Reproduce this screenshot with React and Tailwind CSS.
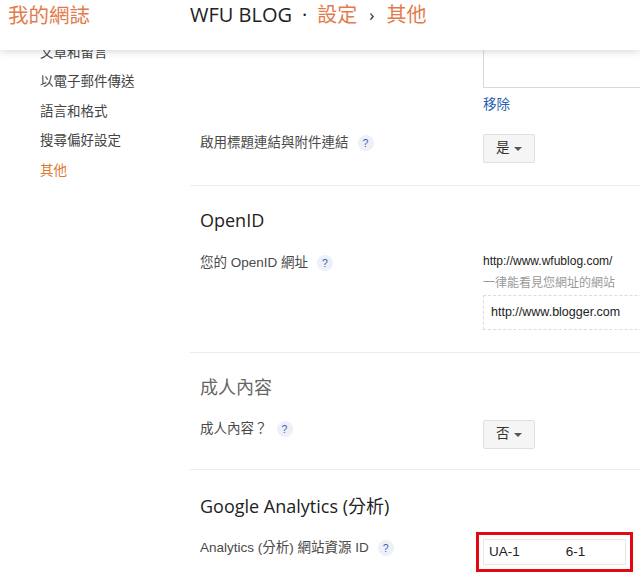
import React from "react";

const ORANGE = "text-[#e27b4c]";

function Help() {
    return (
        <span className="ml-[9px] inline-flex h-[16px] w-[16px] shrink-0 items-center justify-center rounded-full bg-[#eef0f7] text-[10.5px] leading-none text-[#3b63b8]">
            ?
        </span>
    );
}

function Select({ value }) {
    return (
        <div className="flex h-[29px] w-[52px] items-center justify-between rounded-[2px] border border-[#e0e0e0] bg-[#f5f5f5] pl-[12px] pr-[12px] text-[13.5px] text-[#333]">
            <span>{value}</span>
            <span className="h-0 w-0 border-x-[4px] border-t-[4px] border-x-transparent border-t-[#555]" />
        </div>
    );
}

function Row({ label, children, className = "" }) {
    return (
        <div className={"grid grid-cols-[283px_1fr] " + className}>
            <div className="flex h-[18px] items-center text-[13.5px] leading-[18px] text-[#4a4a4a]">
                {label}
                <Help />
            </div>
            <div>{children}</div>
        </div>
    );
}

function Section({ title, muted, className = "", children }) {
    return (
        <section className={"border-b border-[#ebebeb] pl-[10px] pt-[22px] " + className}>
            <h2
                className={
                    "font-['Open_Sans','Noto_Sans_CJK_TC',sans-serif] text-[18px] leading-[24px] " +
                    (muted ? "text-[#666]" : "text-[#222]")
                }
            >
                {title}
            </h2>
            {children}
        </section>
    );
}

export default function App() {
    const nav = ["文章和留言", "以電子郵件傳送", "語言和格式", "搜尋偏好設定"];
    return (
        <div className="flex h-[578px] w-[640px] flex-col overflow-hidden bg-white font-['Liberation_Sans',Arial,'Noto_Sans_CJK_TC',sans-serif]">
            {/* Header */}
            <header className="relative z-10 flex h-[50px] shrink-0 items-start bg-white pt-[1px] shadow-[0_2px_7px_rgba(0,0,0,0.14)]">
                <div className={"w-[190px] shrink-0 pl-[8px] font-['Noto_Sans_CJK_TC',sans-serif] text-[20.5px] leading-[27px] " + ORANGE}>
                    我的網誌
                </div>
                <div className="flex items-center font-['Open_Sans','Noto_Sans_CJK_TC',sans-serif] text-[20px] leading-[27px] text-[#222]">
                    <span>WFU BLOG</span>
                    <span className="mx-[10px]">·</span>
                    <span className={ORANGE}>設定</span>
                    <span className="mx-[12px] text-[17px]">›</span>
                    <span className={ORANGE}>其他</span>
                </div>
            </header>

            <div className="flex min-h-0 flex-1 overflow-hidden">
                {/* Sidebar */}
                <nav className="-mt-[12px] w-[190px] shrink-0 pl-[40px] text-[13.5px] text-[#444]">
                    {nav.map((n) => (
                        <div key={n} className="flex h-[29.5px] items-center">
                            {n}
                        </div>
                    ))}
                    <div className="flex h-[29.5px] items-center text-[#e0782e]">其他</div>
                </nav>

                {/* Content */}
                <main className="min-w-0 flex-1">
                    <section className="-mt-[22px] border-b border-[#ebebeb] pl-[10px] pb-[22px]">
                        <div className="grid grid-cols-[283px_1fr]">
                            <div />
                            <div>
                                <div className="h-[60px] w-[200px] border border-[#d9d9d9] bg-white" />
                                <div className="mt-[8px] text-[13.5px] leading-[18px] text-[#2a5db0]">移除</div>
                            </div>
                        </div>
                        <Row label="啟用標題連結與附件連結" className="mt-[20px]">
                            <Select value="是" />
                        </Row>
                    </section>

                    <Section title="OpenID" className="pb-[22px]">
                        <Row label="您的 OpenID 網址" className="mt-[22px]">
                            <div className="-mt-[1px] text-[12px] leading-[16px] text-[#222]">http://www.wfublog.com/</div>
                            <div className="mt-[6px] text-[12px] leading-[16px] text-[#999]">一律能看見您網址的網站</div>
                            <div className="mt-[4px] flex h-[35px] w-[200px] items-center border border-dashed border-[#dcdcdc] pl-[7px] text-[12.5px] text-[#222]">
                                http://www.blogger.com
                            </div>
                        </Row>
                    </Section>

                    <Section title="成人內容" muted className="pb-[20px]">
                        <Row label="成人內容？" className="mt-[21px]">
                            <Select value="否" />
                        </Row>
                    </Section>

                    <section className="pl-[10px] pt-[24px]">
                        <h2 className="font-['Open_Sans','Noto_Sans_CJK_TC',sans-serif] text-[18px] leading-[24px] text-[#222]">
                            Google Analytics (分析)
                        </h2>
                        <Row label="Analytics (分析) 網站資源 ID" className="mt-[21px]">
                            <div className="flex h-[26px] w-[143px] items-center border border-[#e8e8e8] pl-[5px] text-[13.5px] text-[#222] outline-[3px] outline-offset-[4px] outline-[#e30613] outline-solid">
                                <span>UA-1</span>
                                <span className="ml-[46px]">6-1</span>
                            </div>
                        </Row>
                    </section>
                </main>
            </div>
        </div>
    );
}
